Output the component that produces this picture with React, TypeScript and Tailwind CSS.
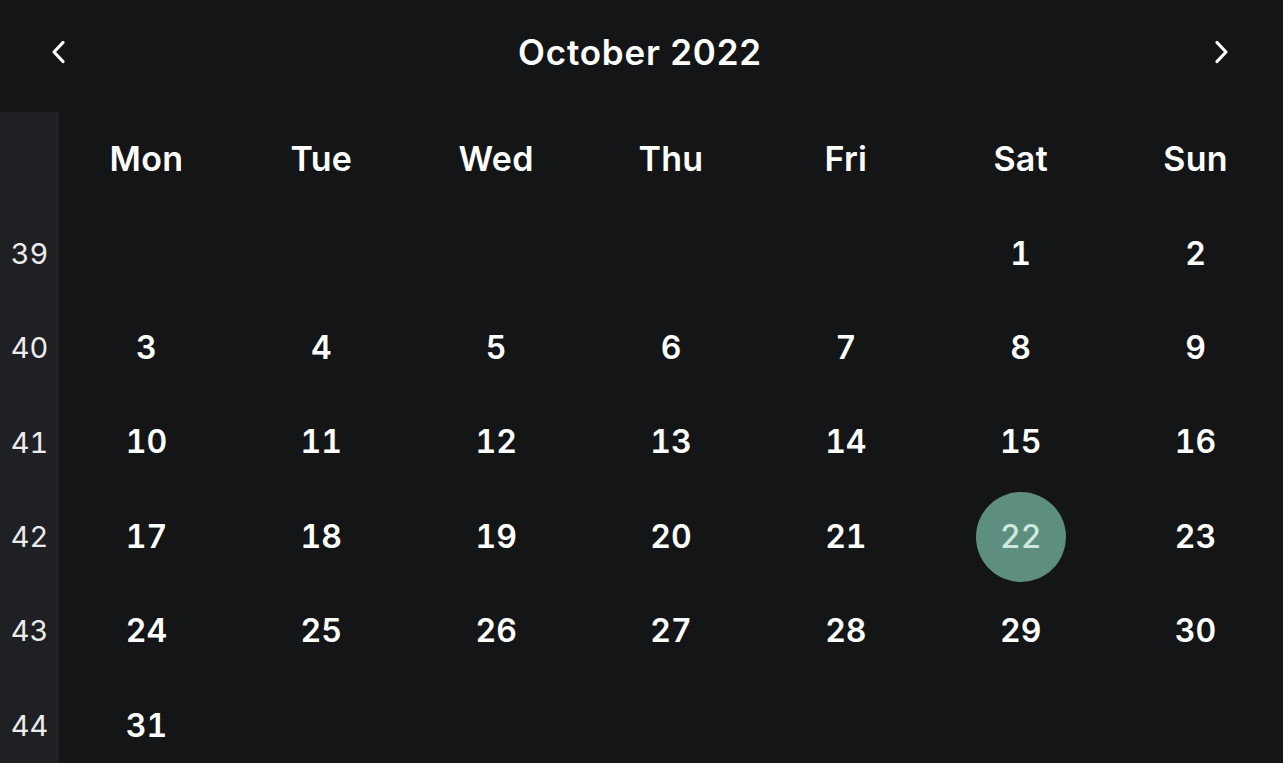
import React from "react";

const dayNames = ["Mon", "Tue", "Wed", "Thu", "Fri", "Sat", "Sun"];

const weeks: { num: number; days: (number | null)[] }[] = [
  { num: 39, days: [null, null, null, null, null, 1, 2] },
  { num: 40, days: [3, 4, 5, 6, 7, 8, 9] },
  { num: 41, days: [10, 11, 12, 13, 14, 15, 16] },
  { num: 42, days: [17, 18, 19, 20, 21, 22, 23] },
  { num: 43, days: [24, 25, 26, 27, 28, 29, 30] },
  { num: 44, days: [31, null, null, null, null, null, null] },
];

const Chevron = ({ dir }: { dir: "left" | "right" }) => (
  <svg width="16" height="24" viewBox="0 0 16 24" fill="none" aria-hidden="true">
    <path
      d={dir === "left" ? "M13 2.5L4 12L13 21.5" : "M3 2.5L12 12L3 21.5"}
      stroke="white"
      strokeWidth="3.2"
      strokeLinecap="round"
      strokeLinejoin="round"
    />
  </svg>
);

const App = () => {
  return (
    <div className="h-[763px] w-full overflow-hidden bg-[#141517] text-white font-['Inter',sans-serif]">
      <div className="flex h-[112px] items-center justify-between pl-[50px] pr-[53px] pb-[8px]">
        <button type="button" className="flex h-8 w-4 items-center justify-center">
          <Chevron dir="left" />
        </button>
        <h1 className="text-[35px] font-semibold tracking-[0.8px]">October 2022</h1>
        <button type="button" className="flex h-8 w-4 items-center justify-center">
          <Chevron dir="right" />
        </button>
      </div>

      <div className="grid grid-cols-[59px_repeat(7,1fr)] auto-rows-[94.4px]">
        <div className="bg-[#1f2024]" />
        {dayNames.map((d) => (
          <div key={d} className="flex items-center justify-center pb-[1px] text-[34px] font-semibold tracking-[0.3px]">
            {d}
          </div>
        ))}

        {weeks.map((w) => (
          <React.Fragment key={w.num}>
            <div className="flex items-center justify-center bg-[#1f2024] text-[29px] font-normal tabular-nums text-[#ececec]">
              {w.num}
            </div>
            {w.days.map((d, i) => (
              <div key={i} className="flex items-center justify-center">
                {d === 22 ? (
                  <span className="flex h-[90px] w-[90px] items-center justify-center rounded-full bg-[#5e8e7f] text-[32px] font-medium tabular-nums text-[#cde8dd]">
                    {d}
                  </span>
                ) : d !== null ? (
                  <span className="text-[32px] font-semibold tabular-nums">{d}</span>
                ) : null}
              </div>
            ))}
          </React.Fragment>
        ))}
      </div>
    </div>
  );
};

export default App;
